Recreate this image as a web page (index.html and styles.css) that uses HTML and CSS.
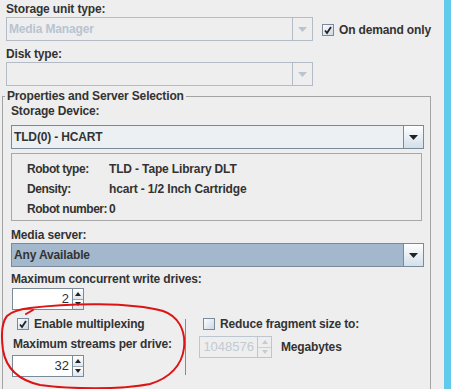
FILE: index.html
```html
<!DOCTYPE html>
<html lang="en">
<head>
    <meta charset="UTF-8">
    <meta name="viewport" content="width=device-width, initial-scale=1.0">
    <title>Storage Unit</title>
    <link rel="stylesheet" href="styles.css">
</head>
<body>
    <div class="window">
        <div class="panel">
            <div class="top">
                <div class="label">Storage unit type:</div>
                <div class="row">
                    <div class="combo combo-off combo-top">
                        <span class="combo-text">Media Manager</span>
                        <span class="combo-btn"><svg width="9" height="5" viewBox="0 0 9 5"><path d="M0 0h9L4.5 5z"/></svg></span>
                    </div>
                    <div class="check">
                        <svg class="box" width="12" height="12" viewBox="0 0 12 12"><rect x="0.5" y="0.5" width="11" height="11" fill="url(#boxfill)" stroke="#7a8a99"/><path d="M3 6.5l2 2.5 4-6" fill="none" stroke="#222" stroke-width="1.8"/></svg>
                        On demand only
                    </div>
                </div>
                <div class="label label-gap">Disk type:</div>
                <div class="combo combo-off combo-top">
                    <span class="combo-text"></span>
                    <span class="combo-btn"><svg width="9" height="5" viewBox="0 0 9 5"><path d="M0 0h9L4.5 5z"/></svg></span>
                </div>
            </div>

            <fieldset class="group">
                <legend>Properties and Server Selection</legend>
                <div class="label">Storage Device:</div>
                <div class="combo combo-wide">
                    <span class="combo-text">TLD(0) - HCART</span>
                    <span class="combo-btn"><svg width="9" height="5" viewBox="0 0 9 5"><path d="M0 0h9L4.5 5z"/></svg></span>
                </div>

                <div class="info">
                    <div class="info-row"><span class="info-key">Robot type:</span><span>TLD - Tape Library DLT</span></div>
                    <div class="info-row"><span class="info-key">Density:</span><span>hcart - 1/2 Inch Cartridge</span></div>
                    <div class="info-row"><span class="info-key">Robot number:</span><span>0</span></div>
                </div>

                <div class="label label-server">Media server:</div>
                <div class="combo combo-wide combo-sel">
                    <span class="combo-text">Any Available</span>
                    <span class="combo-btn"><svg width="9" height="5" viewBox="0 0 9 5"><path d="M0 0h9L4.5 5z"/></svg></span>
                </div>

                <div class="label label-drives">Maximum concurrent write drives:</div>
                <div class="spinner">
                    <span class="spin-value">2</span>
                    <span class="spin-btns"><span class="spin-up"></span><span class="spin-down"></span></span>
                </div>

                <div class="mux">
                    <div class="mux-left">
                        <div class="check check-row">
                            <svg class="box" width="12" height="12" viewBox="0 0 12 12"><rect x="0.5" y="0.5" width="11" height="11" fill="url(#boxfill)" stroke="#7a8a99"/><path d="M3 6.5l2 2.5 4-6" fill="none" stroke="#222" stroke-width="1.8"/></svg>
                            Enable multiplexing
                        </div>
                        <div class="label label-streams">Maximum streams per drive:</div>
                        <div class="spinner spinner-streams">
                            <span class="spin-value">32</span>
                            <span class="spin-btns"><span class="spin-up"></span><span class="spin-down"></span></span>
                        </div>
                    </div>
                    <div class="mux-sep"></div>
                    <div class="mux-right">
                        <div class="check check-row">
                            <svg class="box" width="12" height="12" viewBox="0 0 12 12"><rect x="0.5" y="0.5" width="11" height="11" fill="url(#boxfill)" stroke="#7a8a99"/></svg>
                            Reduce fragment size to:
                        </div>
                        <div class="frag">
                            <div class="spinner spinner-off">
                                <span class="spin-value">1048576</span>
                                <span class="spin-btns"><span class="spin-up"></span><span class="spin-down"></span></span>
                            </div>
                            <span class="unit">Megabytes</span>
                        </div>
                    </div>
                </div>
            </fieldset>
        </div>
        <div class="edge"></div>
    </div>

    <svg class="defs" width="0" height="0">
        <defs>
            <linearGradient id="boxfill" x1="0" y1="0" x2="1" y2="1">
                <stop offset="0" stop-color="#ffffff"/>
                <stop offset="1" stop-color="#c8d6e4"/>
            </linearGradient>
        </defs>
    </svg>

    <!-- red marker circle drawn over the multiplexing options -->
    <svg class="scribble" width="451" height="389" viewBox="0 0 451 389">
        <path d="M7 316C12 311 22 309 30 308C70 303 130 302 163 311C178 316 186 330 184 348C182 365 170 378 150 384C120 390 70 389 40 385C18 380 6 368 3 350C1 335 2 322 7 316M33 310L26 314" fill="none" stroke="#dc1414" stroke-width="2" stroke-linecap="round"/>
    </svg>
</body>
</html>
```

FILE: styles.css
```css
* {
    box-sizing: border-box;
}
body {
    margin: 0;
    height: 389px;
    overflow: hidden;
    position: relative;
    background: #eeeeee;
    color: #333333;
    font-family: "Liberation Sans", Arial, sans-serif;
    font-size: 12px;
    font-weight: bold;
    letter-spacing: -0.15px;
}
.window {
    display: flex;
    height: 100%;
}
.panel {
    width: 444px;
}
.edge {
    flex: 1;
    background: #5fcaea;
}
.top {
    padding: 2px 0 0 6px;
}
.label {
    height: 15px;
    line-height: 15px;
    white-space: nowrap;
}
.label-gap {
    margin-top: 6px;
}
.row {
    display: flex;
    align-items: center;
}

/* combo boxes */
.combo {
    display: flex;
    height: 24px;
    border: 1px solid #7a8a99;
    background: #edf0f3;
}
.combo-top {
    width: 307px;
}
.combo-wide {
    margin-top: 6px;
}
.combo-text {
    flex: 1;
    padding-left: 2px;
    line-height: 22px;
    white-space: nowrap;
}
.combo-btn {
    width: 20px;
    display: flex;
    align-items: center;
    justify-content: center;
    border-left: 1px solid #7a8a99;
    background: linear-gradient(#fdfeff, #d3dfea);
    fill: #222222;
}
.combo-off {
    border-color: #b3bcc6;
    background: #eeeeee;
    color: #b8c4d2;
}
.combo-off .combo-btn {
    border-color: #b3bcc6;
    background: #eeeeee;
    fill: #b8c4d0;
}
.combo-sel {
    margin-top: 0;
    background: #a3b8cc;
}

/* checkboxes */
.check {
    display: flex;
    align-items: center;
    gap: 5px;
    margin: 2px 0 0 9px;
    white-space: nowrap;
}
.check-row {
    margin: 0;
    height: 16px;
}

/* group */
.group {
    margin: 2px 0 0 2px;
    width: 429px;
    min-height: 320px;
    padding: 0 6px 0 8px;
    border: 1px solid #a3a3a3;
}
.group legend {
    margin-left: -6px;
    padding: 0 2px;
    line-height: 16px;
}
.info {
    margin: 4px 2px 0 0;
    height: 68px;
    padding: 5px 0 0 15px;
    border: 1px solid #a8a8a8;
}
.info-row {
    display: flex;
    height: 20px;
    line-height: 20px;
    white-space: nowrap;
}
.info-key {
    flex: none;
    width: 82px;
    letter-spacing: -0.45px;
}
.label-server {
    margin-top: 7px;
}
.label-drives {
    margin-top: 5px;
}

/* spinners */
.spinner {
    display: flex;
    width: 72px;
    height: 22px;
    margin-left: 1px;
    margin-top: 1px;
}
.spin-value {
    flex: 1;
    background: #ffffff;
    border: 1px solid #7a8a99;
    text-align: right;
    padding-right: 3px;
    line-height: 20px;
    font-weight: normal;
    font-size: 13px;
    letter-spacing: 0;
}
.spin-btns {
    width: 11px;
    display: flex;
    flex-direction: column;
    border: 1px solid #7a8a99;
    border-left: none;
}
.spin-up, .spin-down {
    flex: 1;
    display: flex;
    align-items: center;
    justify-content: center;
    background: linear-gradient(#ffffff, #dfe7ef);
}
.spin-up {
    border-bottom: 1px solid #9aa8b6;
}
.spin-up::after {
    content: "";
    border-left: 3px solid transparent;
    border-right: 3px solid transparent;
    border-bottom: 4px solid #222222;
}
.spin-down::after {
    content: "";
    border-left: 3px solid transparent;
    border-right: 3px solid transparent;
    border-top: 4px solid #222222;
}
.spinner-off {
    width: 73px;
    margin: 0;
}
.spinner-off .spin-value {
    background: #eeeeee;
    border-color: #bcc6d0;
    color: #c2cad2;
}
.spinner-off .spin-btns {
    width: 14px;
    border-color: #bcc6d0;
}
.spinner-off .spin-up,
.spinner-off .spin-down {
    background: #eeeeee;
    border-color: #c8d0d8;
}
.spinner-off .spin-up::after {
    border-bottom-color: #c4ccd4;
}
.spinner-off .spin-down::after {
    border-top-color: #c4ccd4;
}

/* multiplexing area */
.mux {
    display: flex;
    margin-top: 6px;
}
.mux-left {
    width: 174px;
    padding-left: 2px;
}
.mux-left .check-row {
    padding-left: 4px;
}
.label-streams {
    margin-top: 5px;
}
.spinner-streams {
    margin-top: 3px;
    margin-left: -1px;
}
.mux-sep {
    width: 1px;
    height: 56px;
    margin-top: 3px;
    background: #8a8a8a;
}
.mux-right {
    margin-left: 13px;
}
.mux-right .check-row {
    padding-left: 4px;
}
.frag {
    display: flex;
    align-items: center;
    margin-top: 4px;
}
.unit {
    margin-left: 9px;
}

.defs {
    position: absolute;
}
.scribble {
    position: absolute;
    left: 0;
    top: 0;
    pointer-events: none;
}
```
